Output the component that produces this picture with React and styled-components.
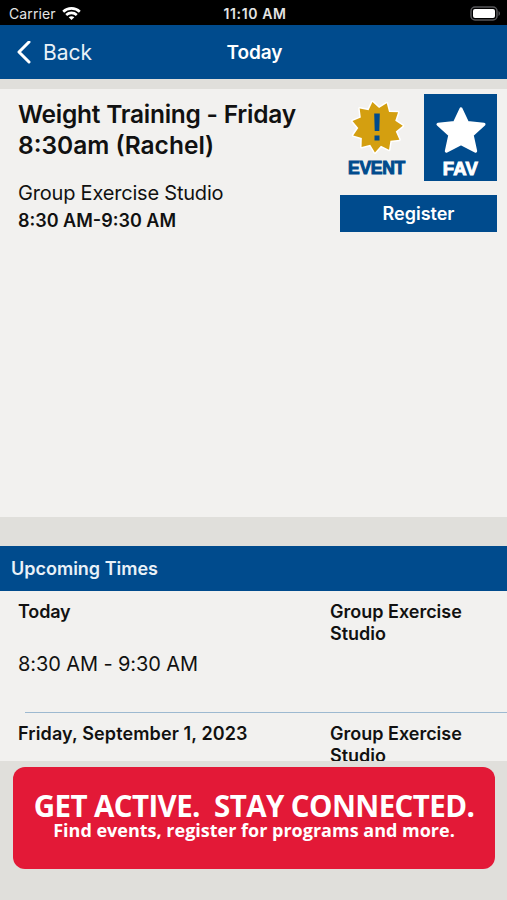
import React from 'react'
import styled, { createGlobalStyle } from 'styled-components'

const blue = '#004b8d'

const GlobalStyle = createGlobalStyle`
  * {
    box-sizing: border-box;
  }
  body {
    margin: 0;
    background-color: #e0dfdb;
    font-family: Inter, "Liberation Sans", sans-serif;
    color: #111;
  }
`
const Screen = styled.div`
  width: 507px;
  height: 900px;
  display: flex;
  flex-direction: column;
  overflow: hidden;
`
const Text = styled.span`
  font-size: ${props => props.$size}px;
  font-weight: ${props => props.$weight || 400};
  line-height: ${props => props.$line || 22}px;
  letter-spacing: ${props => props.$track || 0}px;
  white-space: pre;
`
const StatusBar = styled.div`
  height: 25px;
  padding: 2px 6px 0 9px;
  background-color: #000;
  color: #e4e4e4;
  display: grid;
  grid-template-columns: 1fr auto 1fr;
  align-items: center;
`
const Carrier = styled.div`
  display: flex;
  align-items: center;
  gap: 6px;
`
const Battery = styled.svg`
  justify-self: end;
`
const NavBar = styled.header`
  height: 54px;
  padding: 1px 14px 0 16px;
  background-color: ${blue};
  color: #fff;
  display: grid;
  grid-template-columns: 1fr auto 1fr;
  align-items: center;
`
const BackButton = styled.button`
  display: flex;
  align-items: center;
  gap: 12px;
  padding: 0;
  border: none;
  background: none;
  color: #e9f1f8;
  font-family: inherit;
`
const Details = styled.section`
  height: 428px;
  margin-top: 10px;
  padding: 5px 10px 0 18px;
  background-color: #f2f1ef;
  display: flex;
  justify-content: space-between;
`
const Info = styled.div`
  padding-top: 5px;
  display: flex;
  flex-direction: column;
`
const Title = styled.h1`
  margin: 0 0 17px;
  display: flex;
  flex-direction: column;
`
const Actions = styled.div`
  width: 157px;
  display: flex;
  flex-direction: column;
  gap: 14px;
`
const Tiles = styled.div`
  display: flex;
  justify-content: space-between;
`
const Tile = styled.div`
  width: 73px;
  height: 87px;
  padding-top: ${props => props.$top}px;
  background-color: ${props => (props.$filled ? blue : 'transparent')};
  color: ${props => (props.$filled ? '#fff' : blue)};
  display: flex;
  flex-direction: column;
  align-items: center;
`
const TileLabel = styled(Text)`
  font-family: "Liberation Sans", Arial, sans-serif;
  -webkit-text-stroke: 1px currentColor;
`
const RegisterButton = styled.button`
  height: 37px;
  padding: 0;
  border: none;
  background-color: ${blue};
  color: #fff;
  font-family: inherit;
`
const SectionHeader = styled.h2`
  height: 45px;
  margin: 29px 0 0;
  padding: 0 11px;
  background-color: ${blue};
  color: #e9f1f8;
  display: flex;
  align-items: center;
`
const List = styled.div`
  height: 170px;
  background-color: #f2f1ef;
  overflow: hidden;
`
const Row = styled.div`
  height: 122px;
  padding: 10px 0 0 18px;
  display: grid;
  grid-template-columns: 312px 1fr;
`
const RowColumn = styled.div`
  display: flex;
  flex-direction: column;
  gap: ${props => props.$gap || 0}px;
`
const Divider = styled.div`
  height: 1px;
  margin: -1px 0 0 25px;
  background-color: #9db9d0;
`
const Banner = styled.footer`
  height: 102px;
  margin: 6px 12px 0 13px;
  padding-top: 24px;
  border-radius: 12px;
  background-color: #e31937;
  color: #fff;
  font-family: "Open Sans", "Noto Sans", sans-serif;
  display: flex;
  flex-direction: column;
  align-items: center;
`

const badgeTips = 11
const badgePoints = Array.from({ length: badgeTips * 2 }, (_, i) => {
  const angle = ((i * 180) / badgeTips - 101) * (Math.PI / 180)
  const radius = i % 2 ? 19 : 25.5
  return `${28.3 + radius * Math.cos(angle)},${28 + radius * Math.sin(angle)}`
}).join(' ')

const times = [
  { day: 'Today', hours: '8:30 AM - 9:30 AM', dayTrack: -0.15 },
  { day: 'Friday, September 1, 2023', hours: '8:30 AM - 9:30 AM', dayTrack: 0.12 },
]

const WifiIcon = () => (
  <svg width="19" height="14" viewBox="0 0 19 14" fill="none" stroke="#fff" strokeWidth="2.6">
    <path d="M1.2 4.7C5.8 0.2 13.2 0.2 17.8 4.7" />
    <path d="M4.2 8C7.2 5.2 11.8 5.2 14.8 8" />
    <path d="M9.5 13L6.7 10.2C8.3 8.8 10.7 8.8 12.3 10.2Z" fill="#fff" stroke="none" />
  </svg>
)

const App = () => {
  return (
    <Screen>
      <GlobalStyle />
      <StatusBar>
        <Carrier>
          <Text $size={14} $track={0.1}>Carrier</Text>
          <WifiIcon />
        </Carrier>
        <Text $size={14} $weight={600} $track={0.6}>11:10 AM</Text>
        <Battery width="31" height="15" viewBox="0 0 31 15">
          <rect x="1" y="1" width="26" height="13" rx="4" fill="none" stroke="#57575a" strokeWidth="1.5" />
          <rect x="3" y="3" width="22" height="9" rx="2" fill="#fff" />
          <path d="M28.5 5C30.5 6 30.5 9 28.5 10Z" fill="#57575a" />
        </Battery>
      </StatusBar>
      <NavBar>
        <BackButton>
          <svg width="15" height="24" viewBox="0 0 15 24" fill="none" stroke="#fff" strokeWidth="3" strokeLinecap="round" strokeLinejoin="round">
            <path d="M13 1L3 11L13 21" />
          </svg>
          <Text $size={21}>Back</Text>
        </BackButton>
        <Text $size={19} $weight={600} $track={-0.1} $line={24}>Today</Text>
      </NavBar>
      <Details>
        <Info>
          <Title>
            <Text $size={24.5} $weight={600} $line={31} $track={-0.24}>Weight Training - Friday</Text>
            <Text $size={24.5} $weight={600} $line={31}>8:30am (Rachel)</Text>
          </Title>
          <Text $size={20} $line={30} $track={-0.2}>Group Exercise Studio</Text>
          <Text $size={18} $weight={600} $line={26}>8:30 AM-9:30 AM</Text>
        </Info>
        <Actions>
          <Tiles>
            <Tile $top={5}>
              <svg width="56" height="56" viewBox="0 0 56 56">
                <polygon points={badgePoints} fill="#d49f10" stroke="#fff" strokeWidth="3" strokeLinejoin="round" paintOrder="stroke" />
                <path d="M25.2 14.5H30.8L30.3 32H25.7ZM25.5 36.5H30.5V41.5H25.5Z" fill={blue} />
              </svg>
              <TileLabel $size={17.5} $weight={700} $line={26} $track={-0.3}>EVENT</TileLabel>
            </Tile>
            <Tile $filled $top={10}>
              <svg width="54" height="53" viewBox="0 0 54 53">
                <path d="M27 5.2L33.5 19L50.3 20.7L38.2 31.5L41.8 48L27 40.3L12.2 48L15.8 31.5L3.7 20.7L20.5 19Z" fill="#fff" stroke="#fff" strokeWidth="3.4" strokeLinejoin="round" />
              </svg>
              <TileLabel $size={18.5} $weight={700} $line={25} $track={0.3}>FAV</TileLabel>
            </Tile>
          </Tiles>
          <RegisterButton>
            <Text $size={18} $weight={600}>Register</Text>
          </RegisterButton>
        </Actions>
      </Details>
      <SectionHeader>
        <Text $size={18} $weight={600}>Upcoming Times</Text>
      </SectionHeader>
      <List>
        {times.map(time => (
          <React.Fragment key={time.day}>
            <Row>
              <RowColumn $gap={30}>
                <Text $size={18} $weight={600} $track={time.dayTrack}>{time.day}</Text>
                <Text $size={20} $track={-0.1}>{time.hours}</Text>
              </RowColumn>
              <RowColumn>
                <Text $size={18} $weight={600}>Group Exercise</Text>
                <Text $size={18} $weight={600}>Studio</Text>
              </RowColumn>
            </Row>
            <Divider />
          </React.Fragment>
        ))}
      </List>
      <Banner>
        <Text $size={29.5} $weight={700} $line={30} $track={-0.6}>GET ACTIVE.  STAY CONNECTED.</Text>
        <Text $size={18} $weight={700} $line={19}>Find events, register for programs and more.</Text>
      </Banner>
    </Screen>
  )
}

export default App
